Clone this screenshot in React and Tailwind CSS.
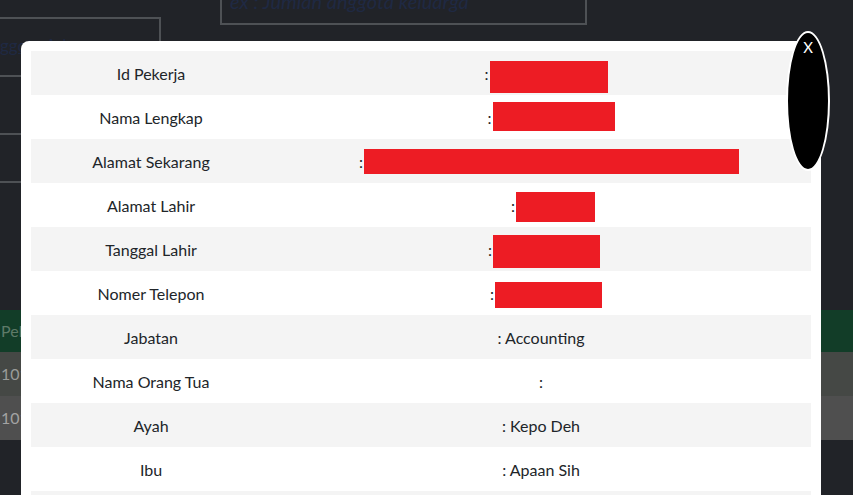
import React from "react";

const rows = [
  ["Id Pekerja", { w: 118, h: 32, t: 10, dx: -2 }],
  ["Nama Lengkap", { w: 122, h: 29, t: 7, dx: 3 }],
  ["Alamat Sekarang", { w: 375, h: 25, t: 10, dx: 1 }],
  ["Alamat Lahir", { w: 79, h: 30, t: 9, dx: 5 }],
  ["Tanggal Lahir", { w: 107, h: 33, t: 8, dx: -4 }],
  ["Nomer Telepon", { w: 107, h: 26, t: 11, dx: -2 }],
  ["Jabatan", "Accounting"],
  ["Nama Orang Tua", ""],
  ["Ayah", "Kepo Deh"],
  ["Ibu", "Apaan Sih"],
  ["", null],
];

function Value({ v }) {
  if (v === null) return <div className="flex-1"></div>;
  if (typeof v === "string") {
    return (
      <div className="flex flex-1 items-center justify-center pt-[2px]">
        {v ? `: ${v}` : ":"}
      </div>
    );
  }
  // redacted values: red boxes over the text
  return (
    <div className="flex flex-1 justify-center pl-[14px]">
      <div className="flex items-center gap-[1px] pt-[2px]" style={{ marginLeft: v.dx * 2 }}>
        <span>:</span>
        <span
          className="self-start bg-[#ed1c24]"
          style={{ width: v.w, height: v.h, marginTop: v.t - 2 }}
        ></span>
      </div>
    </div>
  );
}

export default function App() {
  return (
    <div className="relative h-[495px] w-[853px] overflow-hidden bg-[#212328] font-['Lato','Noto_Sans',sans-serif]">
      {/* page behind the modal */}
      <div className="flex items-start">
        <div className="-ml-[2px] mt-[17px] h-[60px] w-[163px] border-2 border-[#4e5155] pt-[14px] text-[17px] text-[#1f2943] underline">
          ggota Ada
        </div>
        <div className="-mt-[22px] ml-[59px] h-[47px] w-[367px] border-2 border-[#4e5155] px-[8px] pt-[9px] text-[20px] italic leading-[24px] text-[#1f2943]">
          ex : Jumlah anggota keluarga
        </div>
      </div>
      <div className="-ml-[2px] mt-[56px] h-[50px] w-[320px] border-2 border-[#4e5155]"></div>
      <div className="mt-[127px] text-[16px]">
        <div className="flex h-[42px] items-center bg-[#123d28] pl-[1px] text-[#5e7a68]">Pelanggan</div>
        <div className="flex h-[44px] items-center bg-[#454845] pl-[1px] text-[#9a9c9a]">1011</div>
        <div className="flex h-[44px] items-center bg-[#4f4f4f] pl-[1px] text-[#a3a3a3]">1012</div>
      </div>

      {/* modal */}
      <div className="absolute inset-0">
        <div className="ml-[21px] mt-[41px] w-[800px] rounded-t-lg bg-white p-[10px] text-[16px] text-[#212529]">
          {rows.map(([label, v], i) => (
            <div
              key={i}
              className={`flex h-[44px] ${i % 2 === 0 ? "bg-[#f4f4f4]" : "bg-white"}`}
            >
              <div className="flex w-[240px] items-center justify-center pt-[2px]">{label}</div>
              <Value v={v} />
            </div>
          ))}
        </div>
        <button className="absolute left-[786px] top-[31px] flex h-[140px] w-[44px] justify-center rounded-[50%] border-2 border-white bg-black pt-[7px] text-[15px] leading-none text-white">
          X
        </button>
      </div>
    </div>
  );
}
